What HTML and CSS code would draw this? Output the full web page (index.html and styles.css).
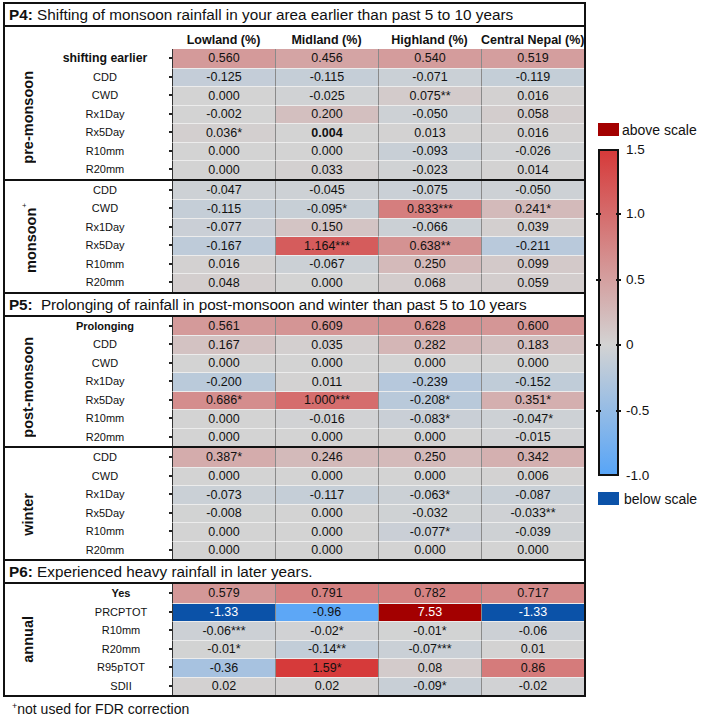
FILE: index.html
```html
<!DOCTYPE html>
<html lang="en">
<head>
<meta charset="utf-8">
<title>Perception vs indices</title>
<link rel="stylesheet" href="styles.css">
</head>
<body>
<div class="page">
  <div class="left">
    <div class="frame">
      <div class="title"><b>P4:</b> Shifting of monsoon rainfall in your area earlier than past 5 to 10 years</div>
      <div class="head"><span></span><span>Lowland (%)</span><span>Midland (%)</span><span>Highland (%)</span><span>Central Nepal (%)</span></div>
      <div class="block pre" data-key="pre"><div class="sect"><span>pre-monsoon</span></div><div class="rows"></div></div>
      <div class="block sep mon" data-key="mon"><div class="sect"><span>monsoon<sup>+</sup></span></div><div class="rows"></div></div>
      <div class="title mid tight"><b>P5:</b>&nbsp; Prolonging of rainfall in post-monsoon and winter than past 5 to 10 years</div>
      <div class="block post" data-key="post"><div class="sect"><span>post-monsoon</span></div><div class="rows"></div></div>
      <div class="block sep win" data-key="win"><div class="sect"><span>winter</span></div><div class="rows"></div></div>
      <div class="title mid"><b>P6:</b> Experienced heavy rainfall in later years.</div>
      <div class="block annual" data-key="ann"><div class="sect"><span>annual</span></div><div class="rows"></div></div>
    </div>
    <div class="foot"><sup>+</sup>not used for FDR correction</div>
  </div>
  <div class="legend">
    <div class="lrow"><span class="sw above"></span><span>above scale</span></div>
    <div class="bar">
      <i class="tk" style="top:65.4px"></i><i class="tk" style="top:130.8px"></i><i class="tk" style="top:196.2px"></i><i class="tk" style="top:261.6px"></i>
      <span class="lbl" style="top:1px">1.5</span>
      <span class="lbl" style="top:65.4px">1.0</span>
      <span class="lbl" style="top:130.8px">0.5</span>
      <span class="lbl" style="top:196.2px">0</span>
      <span class="lbl" style="top:261.6px">-0.5</span>
      <span class="lbl" style="top:327px">-1.0</span>
    </div>
    <div class="lrow below-row"><span class="sw below"></span><span>below scale</span></div>
  </div>
</div>
<script src="script.js"></script>
</body>
</html>
```

FILE: styles.css
```css
* { box-sizing: border-box; }
body {
  margin: 0;
  background: #fff;
  color: #111;
  font-family: "Liberation Sans", Arial, Helvetica, sans-serif;
}
.page {
  display: flex;
  align-items: flex-start;
  padding: 2px 0 0 3px;
}
.left { width: 583px; }
.frame {
  width: 583px;
  border: 2px solid #111;
}
.title {
  height: 23px;
  border-bottom: 2px solid #111;
  font-size: 15.3px;
  line-height: 21px;
  padding-left: 4px;
  white-space: nowrap;
}
.title.mid {
  height: 25px;
  border-top: 2px solid #111;
}
.title.tight { letter-spacing: -0.08px; }
.head {
  display: grid;
  grid-template-columns: 167px repeat(4, 103px);
  height: 22px;
}
.head span {
  align-self: end;
  text-align: center;
  font-weight: bold;
  font-size: 12.5px;
  line-height: 14px;
  padding-bottom: 2px;
  white-space: nowrap;
}
.block { display: flex; }
.block.sep { border-top: 2px solid #111; }
.sect {
  width: 46px;
  flex: none;
  display: flex;
  align-items: center;
  justify-content: center;
}
.sect span {
  writing-mode: vertical-rl;
  transform: rotate(180deg);
  font-weight: bold;
  font-size: 14.5px;
  line-height: 16px;
  white-space: nowrap;
}
.sect sup { font-size: 8px; font-weight: normal; }
.pre .sect span { margin-top: 8px; }
.mon .sect span { margin-top: 3px; }
.post .sect span { margin-top: 12px; }
.win .sect span { margin-top: 22px; }
.rows { flex: 1; }
.row {
  display: grid;
  grid-template-columns: 121px repeat(4, 103px);
  height: 18.5px;
}
.lab {
  position: relative;
  display: flex;
  align-items: center;
  justify-content: center;
  padding-right: 13px;
  font-size: 11px;
  white-space: nowrap;
}
.lab.b { font-weight: bold; }
.lab.big { font-size: 12.3px; }
.annual .lab { padding-right: 0; padding-left: 19px; }
.lab::after {
  content: "";
  position: absolute;
  right: 0;
  top: 50%;
  width: 3px;
  height: 2px;
  margin-top: -1px;
  background: #222;
}
.c {
  display: flex;
  align-items: center;
  justify-content: center;
  border-left: 1px solid #8a8a8a;
  font-size: 12.5px;
  white-space: nowrap;
}
.row .c:nth-child(2) { border-left-color: #333; }
.row + .row .c { border-top: 1px solid #ececec; }
.c.strong { font-weight: bold; }
.c.light { color: #fff; }
.foot {
  margin-top: 2px;
  padding-left: 9px;
  font-size: 14px;
  line-height: 20px;
}
.foot sup { font-size: 9px; vertical-align: 5px; line-height: 0; }
.legend {
  margin-left: 12px;
  margin-top: 121px;
  width: 105px;
  font-size: 14px;
}
.lrow {
  display: flex;
  align-items: center;
  gap: 3px;
  height: 13px;
  white-space: nowrap;
}
.below-row { gap: 5px; margin-top: 16px; }
.sw { width: 21px; height: 13px; flex: none; }
.sw.above { background: #a30000; }
.sw.below { background: #0b52a8; }
.bar {
  position: relative;
  margin-top: 13px;
  width: 21px;
  height: 327px;
  border: 2px solid #111;
  background: linear-gradient(to bottom, rgb(214,58,58) 0%, rgb(211,211,211) 60%, rgb(88,165,247) 100%);
}
.tk {
  position: absolute;
  left: -4px;
  right: -4px;
  height: 2px;
  margin-top: -3px;
  background: linear-gradient(to right, #111 0 5px, transparent 5px calc(100% - 5px), #111 calc(100% - 5px));
}
.lbl {
  position: absolute;
  left: 26px;
  transform: translateY(-60%);
  font-size: 13.5px;
  line-height: 16px;
  white-space: nowrap;
}
```

FILE: script.js
```js
var DATA = {
  pre: [
    ['shifting earlier', 'b big', '0.560', '0.456', '0.540', '0.519'],
    ['CDD', '', '-0.125', '-0.115', '-0.071', '-0.119'],
    ['CWD', '', '0.000', '-0.025', '0.075**', '0.016'],
    ['Rx1Day', '', '-0.002', '0.200', '-0.050', '0.058'],
    ['Rx5Day', '', '0.036*', '!0.004', '0.013', '0.016'],
    ['R10mm', '', '0.000', '0.000', '-0.093', '-0.026'],
    ['R20mm', '', '0.000', '0.033', '-0.023', '0.014']
  ],
  mon: [
    ['CDD', '', '-0.047', '-0.045', '-0.075', '-0.050'],
    ['CWD', '', '-0.115', '-0.095*', '0.833***', '0.241*'],
    ['Rx1Day', '', '-0.077', '0.150', '-0.066', '0.039'],
    ['Rx5Day', '', '-0.167', '1.164***', '0.638**', '-0.211'],
    ['R10mm', '', '0.016', '-0.067', '0.250', '0.099'],
    ['R20mm', '', '0.048', '0.000', '0.068', '0.059']
  ],
  post: [
    ['Prolonging', 'b', '0.561', '0.609', '0.628', '0.600'],
    ['CDD', '', '0.167', '0.035', '0.282', '0.183'],
    ['CWD', '', '0.000', '0.000', '0.000', '0.000'],
    ['Rx1Day', '', '-0.200', '0.011', '-0.239', '-0.152'],
    ['Rx5Day', '', '0.686*', '1.000***', '-0.208*', '0.351*'],
    ['R10mm', '', '0.000', '-0.016', '-0.083*', '-0.047*'],
    ['R20mm', '', '0.000', '0.000', '0.000', '-0.015']
  ],
  win: [
    ['CDD', '', '0.387*', '0.246', '0.250', '0.342'],
    ['CWD', '', '0.000', '0.000', '0.000', '0.006'],
    ['Rx1Day', '', '-0.073', '-0.117', '-0.063*', '-0.087'],
    ['Rx5Day', '', '-0.008', '0.000', '-0.032', '-0.033**'],
    ['R10mm', '', '0.000', '0.000', '-0.077*', '-0.039'],
    ['R20mm', '', '0.000', '0.000', '0.000', '0.000']
  ],
  ann: [
    ['Yes', 'b', '0.579', '0.791', '0.782', '0.717'],
    ['PRCPTOT', '', '-1.33', '-0.96', '7.53', '-1.33'],
    ['R10mm', '', '-0.06***', '-0.02*', '-0.01*', '-0.06'],
    ['R20mm', '', '-0.01*', '-0.14**', '-0.07***', '0.01'],
    ['R95pTOT', '', '-0.36', '1.59*', '0.08', '0.86'],
    ['SDII', '', '0.02', '0.02', '-0.09*', '-0.02']
  ]
};

var HI = [214, 58, 58], MID = [211, 211, 211], LO = [88, 165, 247];

function colour(v) {
  if (v > 2) return { bg: '#a30000', light: true };
  if (v < -1.1) return { bg: '#0b52a8', light: true };
  var end = v >= 0 ? HI : LO;
  var t = v >= 0 ? Math.min(v / 1.5, 1) : Math.min(-v, 1);
  var c = MID.map(function (m, i) { return Math.round(m + (end[i] - m) * t); });
  return { bg: 'rgb(' + c.join(',') + ')', light: false };
}

document.querySelectorAll('.block').forEach(function (block) {
  var rows = block.querySelector('.rows');
  DATA[block.dataset.key].forEach(function (r) {
    var row = document.createElement('div');
    row.className = 'row';
    var lab = document.createElement('div');
    lab.className = 'lab' + (r[1] ? ' ' + r[1] : '');
    lab.textContent = r[0];
    row.appendChild(lab);
    for (var i = 2; i < 6; i++) {
      var raw = r[i];
      var strong = raw.charAt(0) === '!';
      if (strong) raw = raw.slice(1);
      var col = colour(parseFloat(raw));
      var cell = document.createElement('div');
      cell.className = 'c' + (strong ? ' strong' : '') + (col.light ? ' light' : '');
      cell.style.background = col.bg;
      cell.textContent = raw;
      row.appendChild(cell);
    }
    rows.appendChild(row);
  });
});
```
